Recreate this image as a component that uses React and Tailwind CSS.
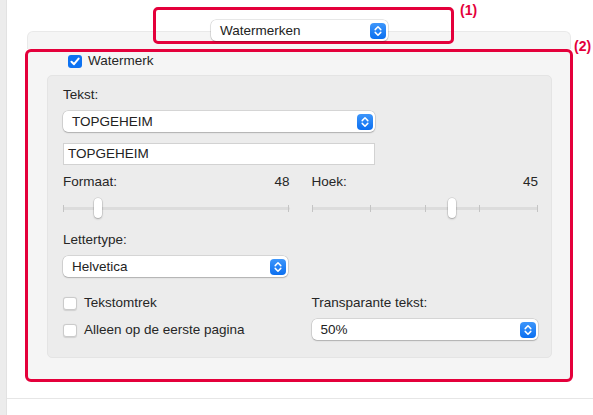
import React from 'react';

// macOS-style stepper arrows on popup buttons
const Stepper = () => (
    <svg width="16" height="16" viewBox="0 0 16 16" className="shrink-0">
        <defs>
            <linearGradient id="stp" x1="0" y1="0" x2="0" y2="1">
                <stop offset="0" stopColor="#3d96fb" />
                <stop offset="1" stopColor="#0b6ff0" />
            </linearGradient>
        </defs>
        <rect x="0" y="0" width="16" height="16" rx="4" fill="url(#stp)" />
        <path d="M5.2 6.6 L8 3.8 L10.8 6.6" fill="none" stroke="#fff" strokeWidth="1.5" strokeLinecap="round" strokeLinejoin="round" />
        <path d="M5.2 9.4 L8 12.2 L10.8 9.4" fill="none" stroke="#fff" strokeWidth="1.5" strokeLinecap="round" strokeLinejoin="round" />
    </svg>
);

const Popup = ({ value, className = '' }) => (
    <div className={`h-[21px] bg-white rounded-[5px] flex items-center justify-between pl-[9px] pr-[2px] shadow-[0_0_0_0.5px_rgba(0,0,0,0.18),0_1px_1.5px_rgba(0,0,0,0.18)] ${className}`}>
        <span className="text-[#222] leading-none">{value}</span>
        <Stepper />
    </div>
);

const Checkbox = ({ checked }) =>
    checked ? (
        <div className="w-[14px] h-[13px] rounded-[3px] bg-[#0d72f2] flex items-center justify-center shrink-0">
            <svg width="10" height="9" viewBox="0 0 10 9">
                <path d="M1.5 4.8 L4 7.2 L8.6 1.6" fill="none" stroke="#fff" strokeWidth="2" strokeLinecap="round" strokeLinejoin="round" />
            </svg>
        </div>
    ) : (
        <div className="w-[14px] h-[13px] rounded-[3px] bg-white border border-[#cbcbcb] shadow-[0_0.5px_1px_rgba(0,0,0,0.12)] shrink-0" />
    );

// track with tick marks and a capsule knob; positions in px along a 226px track
const Slider = ({ ticks, knob }) => (
    <div className="relative h-[20px] w-full">
        <div className="absolute left-0 right-0 top-[9px] h-[3px] bg-[#dcdcdc] rounded-full" />
        {ticks.map((t) => (
            <div key={t} className="absolute top-[7px] w-[1px] h-[7px] bg-[#c4c4c4]" style={{ left: `${t}px` }} />
        ))}
        <div
            className="absolute top-0 w-[8px] h-[20px] rounded-full bg-white shadow-[0_0_0_0.5px_rgba(0,0,0,0.15),0_1px_2px_rgba(0,0,0,0.25)]"
            style={{ left: `${knob - 4}px` }}
        />
    </div>
);

export default function App() {
    return (
        <div className="w-[593px] h-[415px] bg-white flex overflow-hidden text-[13.5px] text-[#262626] font-['Liberation_Sans',Arial,sans-serif]">
            <div className="w-[7px] shrink-0 bg-[#ececec] border-r border-[#e2e2e2]" />

            <div className="flex-1 flex flex-col relative">
                {/* tab header with the pane selector */}
                <div className="relative h-[49px]">
                    <div className="mt-[31px] ml-[20px] mr-[22px] h-[18px] bg-[#f5f5f5] border border-b-0 border-[#e9e9e9] rounded-t-[6px]" />
                    <div className="absolute left-[146px] top-[7px] w-[301px] h-[37px] border-[3px] border-[#e4003b] rounded-[5px] pl-[55px] pt-[10px]">
                        <Popup value="Watermerken" className="w-[177px] h-[20px]" />
                    </div>
                    <span className="absolute left-[453px] top-[2px] font-bold text-[14px] leading-[16px] text-[#e4003b]">(1)</span>
                </div>
                <span className="absolute left-[567px] top-[38px] font-bold text-[14px] leading-[16px] text-[#e4003b]">(2)</span>

                <div className="ml-[18px] mr-[20px] h-[333px] border-[3px] border-[#e4003b] rounded-[6px] bg-[#f5f5f5] flex flex-col">
                    <div className="h-[18px] pl-[40px] flex items-center gap-[6px]">
                        <Checkbox checked />
                        <span>Watermerk</span>
                    </div>

                    <div className="mt-[5px] ml-[19px] mr-[18px] h-[283px] bg-[#ececec] border border-[#e4e4e4] rounded-[5px] pl-[15px] pr-[13px] pt-[11px] flex flex-col">
                        <div className="leading-[16px]">Tekst:</div>
                        <Popup value="TOPGEHEIM" className="mt-[8px] w-[312px]" />
                        <div className="mt-[11px] w-[312px] h-[22px] bg-white border border-[#d2d2d2] pl-[4px] flex items-center text-[#222]">
                            TOPGEHEIM
                        </div>

                        <div className="mt-[9px] grid grid-cols-2 gap-x-[22px]">
                            <div className="flex flex-col">
                                <div className="flex justify-between leading-[16px]">
                                    <span>Formaat:</span>
                                    <span>48</span>
                                </div>
                                <div className="mt-[8px]">
                                    <Slider ticks={[0, 225]} knob={35} />
                                </div>
                            </div>
                            <div className="flex flex-col">
                                <div className="flex justify-between leading-[16px]">
                                    <span>Hoek:</span>
                                    <span>45</span>
                                </div>
                                <div className="mt-[8px]">
                                    <Slider ticks={[0, 58, 113, 167, 225]} knob={140} />
                                </div>
                            </div>
                        </div>

                        <div className="mt-[14px] leading-[16px]">Lettertype:</div>
                        <Popup value="Helvetica" className="mt-[8px] w-[225px]" />

                        <div className="mt-[16px] grid grid-cols-2 gap-x-[22px]">
                            <div className="flex flex-col gap-[7px]">
                                <div className="h-[20px] flex items-center gap-[7px]">
                                    <Checkbox />
                                    <span>Tekstomtrek</span>
                                </div>
                                <div className="h-[20px] flex items-center gap-[7px]">
                                    <Checkbox />
                                    <span>Alleen op de eerste pagina</span>
                                </div>
                            </div>
                            <div className="flex flex-col pt-[2px]">
                                <div className="leading-[16px]">Transparante tekst:</div>
                                <Popup value="50%" className="mt-[8px] w-full" />
                            </div>
                        </div>
                    </div>
                </div>

                <div className="mt-[16px] h-px bg-[#e6e6e6]" />
            </div>
        </div>
    );
}
